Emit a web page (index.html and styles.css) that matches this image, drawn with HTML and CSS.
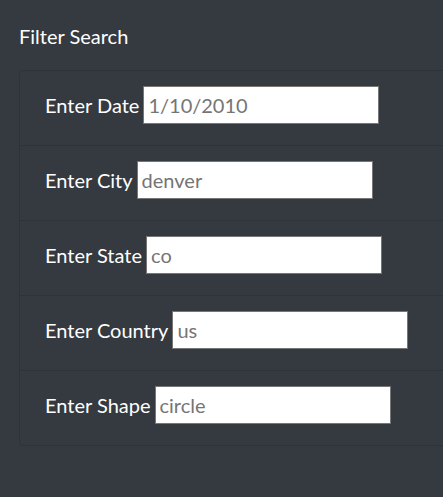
FILE: index.html
```html
<!DOCTYPE html>
<html>
<head>
<meta charset="utf-8">
<link rel="stylesheet" href="styles.css">
</head>
<body>
<div class="page">
  <h5 class="title">Filter Search</h5>
  <ul class="card">
    <li class="row"><label class="lbl" for="d">Enter Date</label><input id="d" class="inp" type="text" placeholder="1/10/2010"></li>
    <li class="row"><label class="lbl" for="c">Enter City</label><input id="c" class="inp" type="text" placeholder="denver"></li>
    <li class="row"><label class="lbl" for="s">Enter State</label><input id="s" class="inp" type="text" placeholder="co"></li>
    <li class="row"><label class="lbl" for="n">Enter Country</label><input id="n" class="inp" type="text" placeholder="us"></li>
    <li class="row"><label class="lbl" for="h">Enter Shape</label><input id="h" class="inp" type="text" placeholder="circle"></li>
  </ul>
</div>
</body>
</html>
```
FILE: styles.css
```css
html, body {
  margin: 0;
  padding: 0;
  background: #343a40;
  overflow: hidden;
}
body {
  font-family: Lato, "Open Sans", sans-serif;
  color: #fff;
  height: 497px;
}
.page {
  padding: 0 0 0 19px;
}
.title {
  margin: 0;
  padding-top: 24px;
  font-size: 20px;
  font-weight: 400;
  line-height: 24px;
  height: 46px;
}
.card {
  list-style: none;
  margin: 0 -40px 0 0;
  padding: 0;
  border: 1px solid #2e3338;
  border-radius: 4px;
}
.row {
  display: flex;
  align-items: baseline;
  padding: 15px 25px 21px;
  border-top: 1px solid #2e3338;
}
.row:first-child {
  border-top: 0;
}
.lbl {
  font-size: 20px;
  margin-right: 4px;
  white-space: nowrap;
}
.inp {
  box-sizing: border-box;
  width: 236px;
  height: 38px;
  margin: 0;
  padding: 0 4px;
  border: 1px solid #767676;
  border-radius: 0;
  background: #fff;
  font-family: inherit;
  font-size: 20px;
  color: #495057;
  outline: none;
}
.inp::placeholder {
  color: #757575;
  opacity: 1;
}
```
